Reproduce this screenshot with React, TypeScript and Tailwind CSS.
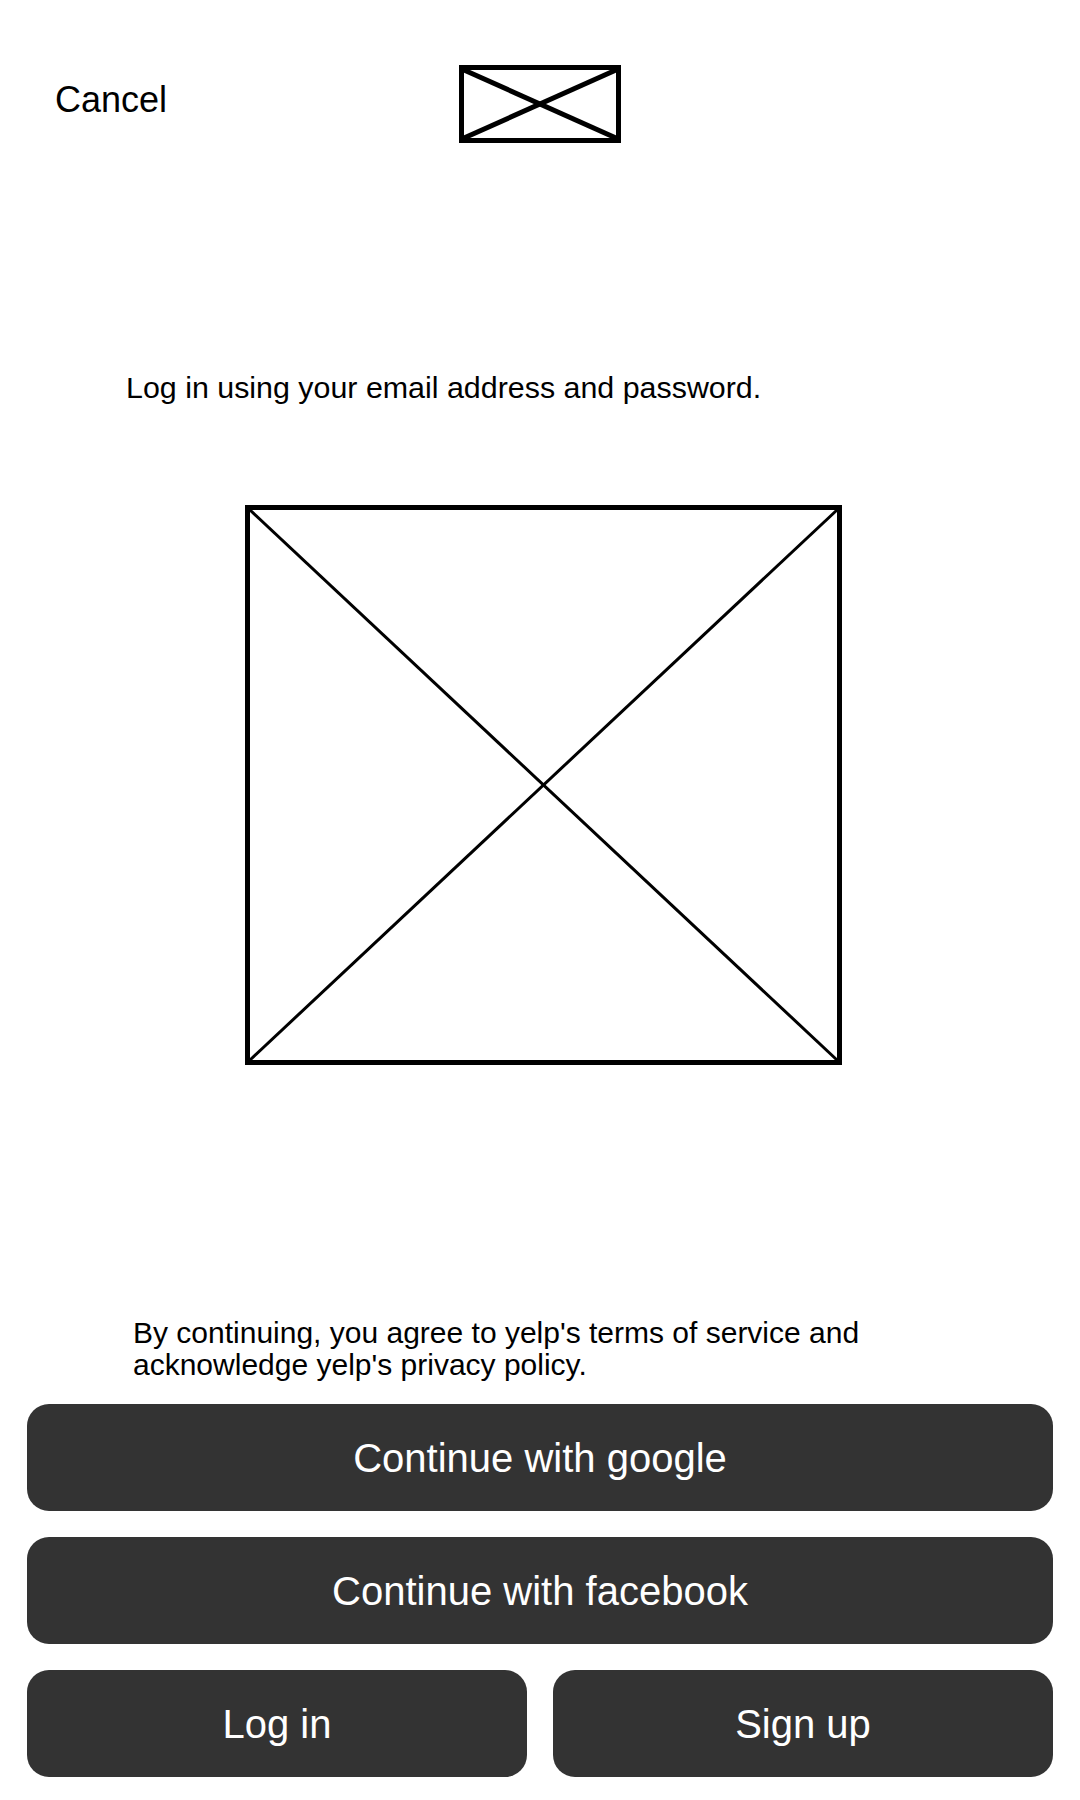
const font = "font-['Liberation_Sans',Arial,sans-serif]"

function Placeholder({ width, height, frame, cross }: { width: number; height: number; frame: number; cross: number }) {
  return (
    <svg width={width} height={height} viewBox={`0 0 ${width} ${height}`} className="block">
      <rect
        x={frame / 2}
        y={frame / 2}
        width={width - frame}
        height={height - frame}
        fill="none"
        stroke="#000"
        strokeWidth={frame}
      />
      <line x1={frame} y1={frame} x2={width - frame} y2={height - frame} stroke="#000" strokeWidth={cross} />
      <line x1={width - frame} y1={frame} x2={frame} y2={height - frame} stroke="#000" strokeWidth={cross} />
    </svg>
  )
}

function DarkButton({ label, className = '' }: { label: string; className?: string }) {
  return (
    <button
      className={`flex h-[107px] items-center justify-center rounded-[22px] bg-[#333333] text-[40px] text-white ${className}`}
    >
      {label}
    </button>
  )
}

export default function App() {
  return (
    <div className={`min-h-[1800px] w-[1080px] bg-white text-black ${font}`}>
      {/* header */}
      <div className="grid grid-cols-[1fr_auto_1fr] items-center pt-[65px]">
        <div className="pb-[8px] pl-[55px] text-[36px] leading-[40px]">Cancel</div>
        <Placeholder width={162} height={78} frame={5} cross={5} />
        <div />
      </div>

      <p className="mt-[227px] pl-[126px] text-[30.4px] leading-[34px]">
        Log in using your email address and password.
      </p>

      <div className="mt-[101px] ml-[245px]">
        <Placeholder width={597} height={560} frame={5} cross={3} />
      </div>

      <p className="mt-[252px] pl-[133px] text-[30px] leading-[32px]">
        By continuing, you agree to yelp's terms of service and
        <br />
        acknowledge yelp's privacy policy.
      </p>

      <div className="mt-[23px] flex flex-col gap-[26px] pl-[27px] pr-[27px]">
        <DarkButton label="Continue with google" />
        <DarkButton label="Continue with facebook" />
        <div className="grid grid-cols-2 gap-[26px]">
          <DarkButton label="Log in" />
          <DarkButton label="Sign up" />
        </div>
      </div>
    </div>
  )
}
